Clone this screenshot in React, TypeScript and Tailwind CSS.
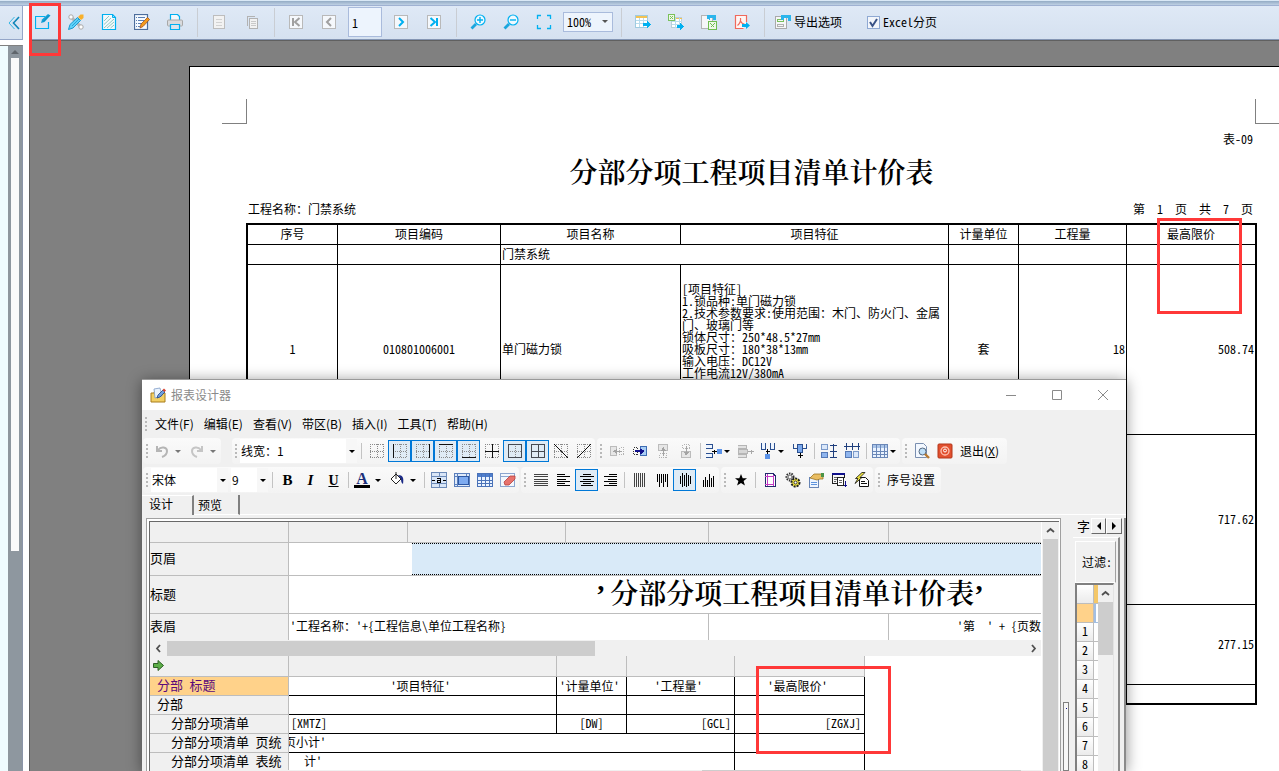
import { useState, type ReactNode } from 'react';

const MONO = "font-['Noto_Sans_Mono_CJK_SC','Noto_Sans_CJK_SC',monospace]";
const UI = "font-['Noto_Sans_CJK_SC','Open_Sans',sans-serif]";
const TITLE = "font-['Liberation_Serif','Noto_Serif_CJK_SC','Noto_Sans_CJK_SC',serif]";

function Svg({ children, size = 16, crisp = true }: { children: ReactNode; size?: number; crisp?: boolean }) {
  return (
    <svg
      width={size}
      height={size}
      viewBox="0 0 16 16"
      fill="none"
      shapeRendering={crisp ? 'crispEdges' : 'auto'}
      className="shrink-0"
    >
      {children}
    </svg>
  );
}

/* ---------- preview toolbar ---------- */

const BLUE = '#00b0f0';

function NavIcon({ d, active }: { d: string; active?: boolean }) {
  return (
    <Svg crisp={false}>
      <rect x="1.5" y="1.5" width="13" height="13" fill="#f5f8fc" stroke="#b9b9b9" />
      <path d={d} stroke={active ? BLUE : '#a0a0a0'} strokeWidth="2" />
    </Svg>
  );
}

const topIcons = {
  edit: (
    <Svg crisp={false}>
      <path d="M10 2.500H.500v12h13V8" stroke={BLUE} strokeWidth="1.200" />
      <path d="M6 9l1-3.500L13 0l2.500 1.500L9.500 8z" fill="#12a0d8" />
      <path d="M8.500 7.500L14 1.500" stroke="#0c86b8" strokeWidth=".8" />
    </Svg>
  ),
  tools: (
    <Svg crisp={false}>
      <path d="M3 3l10 10" stroke="#b7b7b7" strokeWidth="3" />
      <circle cx="3" cy="3" r="2.200" stroke="#a9a9a9" fill="#fff" />
      <circle cx="13" cy="13" r="2.200" stroke="#a9a9a9" fill="#fff" />
      <path d="M.500 15.500L2 10.500 9.500 3.500l3 3-7.500 7.500z" fill="#5fd0f8" stroke="#1a9bd0" />
      <path d="M4 12l7-7" stroke="#1a9bd0" strokeWidth=".8" />
      <path d="M10 3l2.500-2.500h3V4L13 6z" fill="#f8b02a" />
    </Svg>
  ),
  page: (
    <Svg crisp={false}>
      <path d="M1.500.500h10l3 3v12h-13z" fill="#f4f8fc" stroke={BLUE} strokeWidth="1.200" />
      <path d="M11.500.500v3h3" stroke={BLUE} />
      <path d="M3 7l5-5M3 10.500L10 4M3 14L13 5M6 14l7-6M9.500 14l3.500-3" stroke="#86c3b4" strokeWidth=".9" />
    </Svg>
  ),
  note: (
    <Svg crisp={false}>
      <rect x=".5" y=".5" width="13" height="15" fill="#f5faff" stroke="#4c6d9c" strokeWidth="1.2" />
      <path d="M2 3.500h1M4 3.500h7M2 6.500h1M4 6.500h6M2 9.500h1M4 9.500h4M2 12.500h1M4 12.500h2" stroke="#5b7fb4" />
      <path d="M6 14l1-4 6.500-6.500 2 2L9 12.500z" fill="#f39b1d" stroke="#a5521a" strokeWidth=".8" />
    </Svg>
  ),
  print: (
    <Svg crisp={false}>
      <path d="M3.500 6V.500h7l2 2V6" fill="#f4f8fc" stroke={BLUE} strokeWidth="1.200" />
      <rect x=".5" y="6" width="15" height="6" rx="1" fill="#d9dadd" stroke="#a8a8a8" />
      <path d="M3.500 10.500v5h9v-5z" fill="#dbe4ec" stroke={BLUE} strokeWidth="1.200" />
    </Svg>
  ),
  single: (
    <Svg>
      <rect x="2.500" y="1.500" width="11" height="13" fill="#f2f2f2" stroke="#bdbdbd" />
      <path d="M5 5.500h6M5 8.500h6M5 11.500h6" stroke="#d2d2d2" />
    </Svg>
  ),
  copy: (
    <Svg>
      <path d="M3.500 11.500v-9h7" stroke="#b2b2b2" />
      <rect x="5.500" y="4.500" width="8" height="10" fill="#f2f2f2" stroke="#b2b2b2" />
      <path d="M7 7.500h5M7 9.500h5M7 11.500h5" stroke="#c9c9c9" />
    </Svg>
  ),
  zoomIn: (
    <Svg crisp={false}>
      <circle cx="10" cy="6" r="5" fill="#eef9ff" stroke={BLUE} strokeWidth="1.2" />
      <path d="M10 3v6M7 6h6" stroke={BLUE} strokeWidth="1.4" />
      <path d="M6 10l-4.500 4.500" stroke="#1ba6dd" strokeWidth="2.800" />
    </Svg>
  ),
  zoomOut: (
    <Svg crisp={false}>
      <circle cx="10" cy="6" r="5" fill="#eef9ff" stroke={BLUE} strokeWidth="1.2" />
      <path d="M7 6h6" stroke={BLUE} strokeWidth="1.4" />
      <path d="M6 10l-4.500 4.500" stroke="#1ba6dd" strokeWidth="2.800" />
    </Svg>
  ),
  full: (
    <Svg crisp={false}>
      <path d="M1.500 5V1.500H5M11 1.500h3.500V5M14.500 11v3.500H11M5 14.500H1.500V11" stroke={BLUE} strokeWidth="1.300" />
    </Svg>
  ),
  exportTable: (
    <Svg>
      <rect x=".5" y="1.500" width="12" height="12" fill="#fff" stroke="#9fcbe0" />
      <path d="M1 2.500h11" stroke="#f3c252" strokeWidth="2" />
      <path d="M1 6.500h11M1 9.500h11M4.500 4v9M8.500 4v9" stroke="#b9dced" />
      <path d="M8 9h4V7l4 3.500-4 3.500v-2H8z" fill={BLUE} />
    </Svg>
  ),
  exportExcel: (
    <Svg>
      <rect x="3.500" y="3.500" width="10" height="10" fill="#fff" stroke="#b9cfd9" />
      <path d="M7 4h7" stroke="#f3c252" />
      <path d="M4 7.500h10M4 10.500h10M7.500 4v10M11.500 4v10" stroke="#b9dced" />
      <rect x=".5" y=".5" width="6" height="6" fill="#eef8e8" stroke="#7ac15c" />
      <path d="M2 2l3 3M5 2L2 5" stroke="#7ac15c" />
      <path d="M9 11h3V9l4 3.500-4 3.500v-2H9z" fill={BLUE} />
    </Svg>
  ),
  exportSheet: (
    <Svg>
      <rect x=".5" y="1.500" width="11" height="13" fill="#f5f6f8" stroke="#b4b4b4" />
      <path d="M6 5V1h9v5h-3V4H9v2z" fill="#2bb5ec" />
      <rect x="7.500" y="7.500" width="8" height="8" fill="#eef8e8" stroke="#6fbd50" />
      <path d="M9.500 9.500l4 4M13.500 9.500l-4 4" stroke="#6fbd50" />
    </Svg>
  ),
  exportPdf: (
    <Svg crisp={false}>
      <path d="M12.500 8V1.500h-11v13h8" fill="#fff5f3" stroke="#f0695c" strokeWidth="1.200" />
      <path d="M3.500 11.500C6 9.500 7 7 6.500 4M6.500 7c1 2 2.500 3 4 3" stroke="#f0695c" strokeWidth="1.200" />
      <path d="M8 10h4V8l4 3.500-4 3.500v-2H8z" fill={BLUE} />
    </Svg>
  ),
};

function TopButton({ label, children }: { label: string; children: ReactNode }) {
  return (
    <button type="button" aria-label={label} className="flex h-7 w-7 shrink-0 items-center justify-center">
      {children}
    </button>
  );
}

function TopSep() {
  return (
    <span className="flex w-[6px] shrink-0 justify-center">
      <span className="h-[29px] w-px bg-[#c9cdd3]" />
    </span>
  );
}

function PreviewToolbar() {
  const [page, setPage] = useState('1');
  return (
    <div className="flex h-[34px] min-w-0 flex-1 items-center gap-[5px] border-b border-[#8496b4] bg-linear-to-b from-[#dfe9f6] to-[#d5e1f0] pb-px">
      <TopButton label="编辑">{topIcons.edit}</TopButton>
      <TopButton label="工具">{topIcons.tools}</TopButton>
      <TopButton label="页面">{topIcons.page}</TopButton>
      <TopButton label="备注">{topIcons.note}</TopButton>
      <TopButton label="打印">{topIcons.print}</TopButton>
      <TopSep />
      <TopButton label="单页">{topIcons.single}</TopButton>
      <TopButton label="多页">{topIcons.copy}</TopButton>
      <TopSep />
      <TopButton label="首页">
        <NavIcon d="M5 4v8M11.500 4L7 8l4.500 4" />
      </TopButton>
      <TopButton label="上一页">
        <NavIcon d="M10 4L6 8l4 4" />
      </TopButton>
      <input
        aria-label="页码"
        value={page}
        onChange={(e) => setPage(e.target.value)}
        className={`h-[30px] w-[34px] shrink-0 border border-[#a9bbdc] bg-[#edf4fd] px-[3px] text-[12px] ${MONO}`}
      />
      <TopButton label="下一页">
        <NavIcon active d="M6 4l4 4-4 4" />
      </TopButton>
      <TopButton label="末页">
        <NavIcon active d="M11 4v8M4.500 4L9 8l-4.500 4" />
      </TopButton>
      <TopSep />
      <TopButton label="放大">{topIcons.zoomIn}</TopButton>
      <TopButton label="缩小">{topIcons.zoomOut}</TopButton>
      <TopButton label="适合窗口">{topIcons.full}</TopButton>
      <div className="relative shrink-0">
        <select
          aria-label="缩放"
          defaultValue="100%"
          className={`block h-5 w-[50px] appearance-none border border-[#a9bbdc] bg-[#edf4fd] pl-[3px] text-[12px] leading-[18px] ${MONO}`}
        >
          <option>100%</option>
          <option>150%</option>
        </select>
        <span className="pointer-events-none absolute top-2 right-[5px] border-x-3 border-t-3 border-x-transparent border-t-[#555]" />
      </div>
      <TopSep />
      <TopButton label="导出表格">{topIcons.exportTable}</TopButton>
      <TopButton label="导出Excel">{topIcons.exportExcel}</TopButton>
      <TopButton label="导出工作表">{topIcons.exportSheet}</TopButton>
      <TopButton label="导出PDF">{topIcons.exportPdf}</TopButton>
      <TopSep />
      <button type="button" className={`flex shrink-0 items-center gap-[3px] pl-[3px] text-[12px] ${MONO}`}>
        <Svg>
          <rect x=".5" y="2.500" width="11" height="12" fill="#f5f6f8" stroke="#a9a9a9" />
          <rect x="2.500" y="5.500" width="6" height="2" stroke="#7ac15c" />
          <rect x="2.500" y="10.500" width="6" height="2" stroke="#b0b0b0" />
          <path d="M6 6V1h10v6h-3V4H9v2z" fill="#2bb5ec" />
        </Svg>
        导出选项
      </button>
      <label className={`ml-5 flex shrink-0 items-center gap-[3px] text-[12px] ${MONO}`}>
        <span className="relative flex">
          <input
            type="checkbox"
            defaultChecked
            className="peer h-[13px] w-[13px] appearance-none border border-[#8fa9d3] bg-[#f3f6fb]"
          />
          <svg
            width="13"
            height="13"
            viewBox="0 0 13 13"
            fill="none"
            className="pointer-events-none absolute hidden peer-checked:block"
          >
            <path d="M3 6l2.500 4L10 3" stroke="#3a5387" strokeWidth="2" />
          </svg>
        </span>
        Excel分页
      </label>
    </div>
  );
}

/* ---------- report page ---------- */

const SPEC = `[项目特征]
1.锁品种:单门磁力锁
2.技术参数要求:使用范围：木门、防火门、金属门、玻璃门等
锁体尺寸：250*48.5*27mm
吸板尺寸：180*38*13mm
输入电压：DC12V
工作电流12V/380mA`;

const cell = 'border-r border-b border-black px-px pb-[2px]';

function ReportTable() {
  const heads = ['序号', '项目编码', '项目名称', '项目特征', '计量单位', '工程量', '最高限价'];
  return (
    <table className="w-full table-fixed border-separate border-spacing-0 border-t-2 border-l-2 border-black text-[12px] leading-3">
      <colgroup>
        <col className="w-[90px]" />
        <col className="w-[163px]" />
        <col className="w-[180px]" />
        <col />
        <col className="w-[70px]" />
        <col className="w-[108px]" />
        <col className="w-[130px]" />
      </colgroup>
      <thead>
        <tr className="h-5">
          {heads.map((h) => (
            <th key={h} className={`${cell} font-normal last:border-r-2`}>
              {h}
            </th>
          ))}
        </tr>
      </thead>
      <tbody>
        <tr className="h-5">
          <td className={cell} />
          <td className={cell} />
          <td className={cell} colSpan={2}>
            门禁系统
          </td>
          <td className={cell} />
          <td className={cell} />
          <td className={`${cell} border-r-2`} />
        </tr>
        <tr className="h-[170px]">
          <td className={`${cell} text-center`}>1</td>
          <td className={`${cell} text-center`}>010801006001</td>
          <td className={cell}>单门磁力锁</td>
          <td className={`${cell} pt-[18px] align-top whitespace-pre-wrap`}>{SPEC}</td>
          <td className={`${cell} text-center`}>套</td>
          <td className={`${cell} text-right`}>18</td>
          <td className={`${cell} border-r-2 text-right`}>508.74</td>
        </tr>
        {['717.62', '277.15'].map((price, i) => (
          <tr key={price} className={i === 0 ? 'h-[170px]' : 'h-20'}>
            {[0, 1, 2, 3, 4, 5].map((n) => (
              <td key={n} className={cell} />
            ))}
            <td className={`${cell} border-r-2 text-right`}>{price}</td>
          </tr>
        ))}
        <tr className="h-5">
          {[0, 1, 2, 3, 4, 5, 6].map((n) => (
            <td key={n} className={`${cell} border-b-2 last:border-r-2`} />
          ))}
        </tr>
      </tbody>
    </table>
  );
}

function ReportPage() {
  return (
    <div className={`mt-[25px] ml-[159px] min-w-0 flex-1 border-t border-l border-black bg-white pr-[22px] pl-[56px] text-[12px] leading-3 ${MONO}`}>
      <div className="-mr-6 -ml-6 flex justify-between pt-8">
        <span className="h-[25px] w-[25px] border-r border-b border-[#808080]" />
        <span className="h-[25px] w-[26px] border-b border-l border-[#808080]" />
      </div>
      <p className="mt-[9px] pr-1 text-right">表-09</p>
      <h1 className={`mt-[15px] text-center text-[28px] leading-[28px] font-semibold ${TITLE}`}>
        分部分项工程项目清单计价表
      </h1>
      <div className="mt-[15px] flex justify-between pr-1 pl-[2px]">
        <span>工程名称：门禁系统</span>
        <span className="whitespace-pre">第  1  页  共  7  页</span>
      </div>
      <div className="mt-2">
        <ReportTable />
      </div>
    </div>
  );
}

/* ---------- designer window toolbars ---------- */

function Strip({ children, className = '' }: { children: ReactNode; className?: string }) {
  return (
    <div className={`flex h-[26px] shrink-0 items-center rounded-sm bg-linear-to-b from-[#fafafa] to-[#f3f3f3] ${className}`}>
      <span className="flex w-2 flex-col items-center gap-[2px]">
        {[0, 1, 2, 3].map((n) => (
          <span key={n} className="h-[2px] w-[2px] bg-[#b9b9b9]" />
        ))}
      </span>
      {children}
    </div>
  );
}

function Tool({ label, on, children }: { label: string; on?: boolean; children: ReactNode }) {
  return (
    <button
      type="button"
      aria-label={label}
      aria-pressed={on}
      className={`flex h-[22px] w-[23px] shrink-0 items-center justify-center border ${
        on ? 'border-[#0078d7] bg-[#dfebf5]' : 'border-transparent'
      }`}
    >
      {children}
    </button>
  );
}

function Caret({ color = 'border-t-black' }: { color?: string }) {
  return <span className={`border-x-3 border-t-3 border-x-transparent ${color}`} />;
}

function DropTool({ label, wide, muted, children }: { label: string; wide?: boolean; muted?: boolean; children: ReactNode }) {
  return (
    <button
      type="button"
      aria-label={label}
      className={`flex h-[22px] shrink-0 items-center pl-[3px] ${wide ? 'w-[35px] gap-[5px]' : 'w-[31px] gap-[2px]'}`}
    >
      {children}
      <Caret color={muted ? 'border-t-[#777]' : 'border-t-black'} />
    </button>
  );
}

function Sep({ wide }: { wide?: boolean }) {
  return (
    <span className={`flex shrink-0 justify-center ${wide ? 'w-2' : 'w-[6px]'}`}>
      <span className="h-4 w-px bg-[#c3c3c3]" />
    </span>
  );
}

function Combo({ label, value, className }: { label: string; value: string; className: string }) {
  return (
    <div className={`relative shrink-0 ${className}`}>
      <select aria-label={label} defaultValue={value} className="block h-6 w-full appearance-none bg-white pl-px text-[12px] leading-6">
        <option>{value}</option>
      </select>
      <span className="pointer-events-none absolute inset-y-0 right-0 flex w-[11px] items-center justify-center bg-[#f7f7f7]">
        <Caret />
      </span>
    </div>
  );
}

function BorderIcon({ d, soft }: { d?: string; soft?: boolean }) {
  return (
    <Svg>
      <path
        d="M1.500 1v14M1 14.500h14M14.500 1v14M1 1.500h14M8.500 1v14M1 8.500h14"
        stroke="#8a8a8a"
        strokeDasharray="1 1"
      />
      {d && <path d={d} stroke={soft ? '#454a52' : '#111'} />}
    </Svg>
  );
}

const borderTools = [
  { label: '无边框', on: false },
  { label: '左边框', on: true, d: 'M1.500 1v14' },
  { label: '右边框', on: true, d: 'M14.500 1v14' },
  { label: '上边框', on: true, d: 'M1 1.500h14' },
  { label: '下边框', on: true, d: 'M1 14.500h14' },
  { label: '内边框', on: false, d: 'M8.500 1v14M1 8.500h14' },
  { label: '外边框', on: true, soft: true, d: 'M1.500 1.500h13v13h-13z' },
  { label: '所有边框', on: true, soft: true, d: 'M1.500 1.500h13v13h-13zM8.500 1v14M1 8.500h14' },
  { label: '左斜线', on: false, d: 'M1 1l14 14' },
  { label: '右斜线', on: false, d: 'M15 1L1 15' },
];

function MoveIcon({ rotate = 0, active }: { rotate?: number; active?: boolean }) {
  const c = active ? '#10108c' : '#a3a3a3';
  return (
    <Svg>
      <g transform={`rotate(${rotate} 8 8)`}>
        <rect x="1.500" y="4.500" width="4" height="7" stroke={active ? '#333' : '#b3b3b3'} strokeDasharray="1 1" />
        <rect x="8.500" y="3.500" width="6" height="9" fill={active ? '#a9cdf5' : '#e6e6e6'} stroke={active ? '#3d6bb3' : '#bcbcbc'} />
        <path d="M3 8h9M9 5.500v5M10 6.500v3M11 7v2" stroke={c} strokeWidth={active ? 2 : 1} />
      </g>
    </Svg>
  );
}

function SplitIcon({ muted, rotate = 0 }: { muted?: boolean; rotate?: number }) {
  const line = muted ? '#b2b2b2' : '#2a4f8f';
  return (
    <Svg>
      <g transform={`rotate(${rotate} 8 8)`}>
        <path d="M0 1.500h6v4H0M0 10.500h6v4H0" stroke={line} fill={muted ? '#ddd' : '#eef5ff'} />
        <path d="M6 8.500h5M8 6.500v4" stroke={muted ? '#b2b2b2' : '#000'} />
        <rect x="11" y="6" width="5" height="5" fill={muted ? '#d0d0d0' : '#5b93e8'} />
      </g>
    </Svg>
  );
}

function GridIcon({ head = '#6b98e0', lines = '#4a72b8' }: { head?: string; lines?: string }) {
  return (
    <Svg>
      <rect x=".5" y="1.500" width="15" height="13" fill="#eaf3ff" stroke={lines} />
      <rect x="1" y="2" width="14" height="3" fill={head} />
      <path d="M1 8.500h14M1 11.500h14M4.500 2v12M8.500 2v12M12.500 2v12" stroke={lines} />
    </Svg>
  );
}

function LinesIcon({ d, vertical, muted }: { d: string; vertical?: boolean; muted?: boolean }) {
  return (
    <Svg>
      <g transform={vertical ? 'matrix(0 1 1 0 0 0)' : undefined}>
        <path d={d} stroke={muted ? '#444' : '#000'} />
      </g>
    </Svg>
  );
}

const hAlign = [
  { label: '两端对齐', d: 'M1 2.500h14M1 4.500h14M1 7.500h14M1 9.500h14M1 11.500h14M1 13.500h14', muted: true },
  { label: '左对齐', d: 'M1 2.500h8M1 4.500h13M1 7.500h9M1 9.500h13M1 11.500h8M1 13.500h13' },
  { label: '居中', d: 'M4 2.500h8M1 4.500h14M4 7.500h8M1 9.500h14M4 11.500h8M2 13.500h12', on: true },
  { label: '右对齐', d: 'M7 2.500h8M2 4.500h13M6 7.500h9M2 9.500h13M7 11.500h8M2 13.500h13' },
];

const vAlign = [
  { label: '垂直两端', d: 'M1 3.500h14M1 5.500h14M1 7.500h14M1 9.500h14M1 11.500h14M1 13.500h14', muted: true },
  { label: '靠上', d: 'M2 3.500h8M2 5.500h13M2 7.500h9M2 9.500h13M2 11.500h8M2 13.500h13' },
  { label: '垂直居中', d: 'M4 3.500h8M1 5.500h14M3 7.500h11M1 9.500h14M3 11.500h11M4 13.500h8', on: true },
  { label: '靠下', d: 'M8 3.500h7M5 5.500h10M8 7.500h7M2 9.500h13M6 11.500h9M4 13.500h11' },
];

function ToolRowOne() {
  return (
    <div className="flex pl-px">
      <Strip>
        <DropTool label="撤销" wide muted>
          <Svg crisp={false}>
            <path d="M3 3v5h5" stroke="#b5b5b5" strokeWidth="2" />
            <path d="M4 7c3-4 9-3 9 1 0 3-2 5-5 6" stroke="#b5b5b5" strokeWidth="2" />
          </Svg>
        </DropTool>
        <DropTool label="重做" wide muted>
          <Svg crisp={false}>
            <path d="M13 3v5H8" stroke="#c5c5c5" strokeWidth="2" />
            <path d="M12 7C9 3 3 4 3 8c0 3 2 5 5 6" stroke="#c5c5c5" strokeWidth="2" />
          </Svg>
        </DropTool>
      </Strip>
      <Strip className="ml-[11px]">
        <Combo label="线宽" value="线宽：1" className="w-[117px]" />
        <Sep wide />
        {borderTools.map((b) => (
          <Tool key={b.label} label={b.label} on={b.on}>
            <BorderIcon d={b.d} soft={b.soft} />
          </Tool>
        ))}
      </Strip>
      <Strip className="ml-[2px]">
        <Tool label="左插入">
          <MoveIcon rotate={180} />
        </Tool>
        <Tool label="右插入">
          <MoveIcon active />
        </Tool>
        <Tool label="上插入">
          <MoveIcon rotate={270} />
        </Tool>
        <Tool label="下插入">
          <MoveIcon rotate={90} />
        </Tool>
        <Sep />
        <DropTool label="拆分列">
          <SplitIcon />
        </DropTool>
        <Tool label="合并列">
          <Svg>
            <path d="M0 2.500h8v3H0M0 11.500h8v3H0" stroke="#b5b5b5" fill="#e2e2e2" />
            <rect x=".500" y="6.500" width="9" height="4" fill="#d6d6d6" stroke="#b5b5b5" />
            <path d="M10 8.500h6M13.500 6.500v4" stroke="#a8a8a8" />
          </Svg>
        </Tool>
        <DropTool label="拆分行">
          <SplitIcon rotate={90} />
        </DropTool>
        <Tool label="合并行">
          <Svg>
            <path d="M1.500 1v4.500H6M14.500 1v4.500H10" stroke="#2a4f8f" />
            <rect x="5.500" y="1.500" width="5" height="8" fill="#7aa8ec" stroke="#2a4f8f" />
            <path d="M8.500 10v5M6 12.500h5" stroke="#000" />
          </Svg>
        </Tool>
        <Sep />
        <Tool label="等高">
          <Svg>
            <rect x=".5" y="1.500" width="6" height="5" fill="#dbe8fa" stroke="#7c9ac9" />
            <rect x=".5" y="9.500" width="6" height="5" fill="#8fb5ee" stroke="#5579b5" />
            <path d="M9 2.500h7M9 8.500h7M9 14.500h7M12.500 1v14" stroke="#1f3f7d" />
          </Svg>
        </Tool>
        <Tool label="等宽">
          <Svg>
            <path d="M0 3.500h16M2.500 0v7M8.500 0v7M14.500 0v7" stroke="#1f3f7d" />
            <rect x="1.500" y="8.500" width="6" height="6" fill="#8fb5ee" stroke="#5579b5" />
            <rect x="9.500" y="8.500" width="5" height="6" fill="#dbe8fa" stroke="#7c9ac9" />
          </Svg>
        </Tool>
        <Sep />
        <DropTool label="表格">
          <GridIcon head="#a9c4e8" lines="#6b88b8" />
        </DropTool>
      </Strip>
      <Strip className="ml-[2px] pr-2">
        <Tool label="打印预览">
          <Svg crisp={false}>
            <path d="M1.500.500h8l3 3v11h-11z" fill="#f3f8ff" stroke="#7a8fb0" />
            <circle cx="8.500" cy="8.500" r="3.500" fill="#bfe0f8" stroke="#56687f" />
            <path d="M11 11l4 4" stroke="#b8792e" strokeWidth="2.400" />
          </Svg>
        </Tool>
        <Tool label="关闭">
          <Svg crisp={false}>
            <rect x="1" y="1" width="14" height="14" rx="1" fill="#e2502f" stroke="#b3371b" />
            <circle cx="8" cy="8" r="4" stroke="#ffc3b2" strokeWidth="1.300" />
            <circle cx="8" cy="7.500" r="1.500" stroke="#fff" />
          </Svg>
        </Tool>
        <button type="button" className="pl-1 text-[12px]">
          退出(<span className="underline">X</span>)
        </button>
      </Strip>
    </div>
  );
}

function ToolRowTwo() {
  return (
    <div className="mt-[3px] flex pl-px">
      <Strip>
        <Combo label="字体" value="宋体" className="w-[77px]" />
        <Combo label="字号" value="9" className="ml-[3px] w-[37px]" />
        <Sep wide />
        <Tool label="加粗">
          <b className="font-['Liberation_Serif',serif] text-[15px]">B</b>
        </Tool>
        <Tool label="斜体">
          <b className="font-['Liberation_Serif',serif] text-[15px] italic">I</b>
        </Tool>
        <Tool label="下划线">
          <b className="font-['Liberation_Serif',serif] text-[14px] underline">U</b>
        </Tool>
        <Sep />
        <DropTool label="字体颜色" wide>
          <span className="flex w-4 flex-col items-center font-['Liberation_Serif',serif] text-[16px] leading-[13px] font-bold text-[#1c2f7a]">
            A
            <span className="h-[3px] w-4 bg-black" />
          </span>
        </DropTool>
        <DropTool label="填充颜色" wide>
          <Svg crisp={false}>
            <path d="M2 7l5-5 5 5-5 5z" fill="#fff" stroke="#222" />
            <path d="M7 0v7" stroke="#222" />
            <path d="M9 3c5 0 6 3 5 9-2-1-2-4-2-5z" fill="#1b2a86" />
          </Svg>
        </DropTool>
        <Sep />
        <Tool label="合并单元格">
          <Svg>
            <rect x=".5" y=".5" width="15" height="15" fill="#d9e6f7" stroke="#6c8ab8" />
            <path d="M1 4.500h14M1 11.500h14M8.500 1v3M8.500 12v3" stroke="#6c8ab8" />
            <path d="M1 8.500h3M12 8.500h3M6 6.500h3v4H6v-2h3" stroke="#000" />
          </Svg>
        </Tool>
        <Tool label="选择区域">
          <Svg>
            <rect x=".5" y="1.500" width="15" height="13" fill="#dfeaf9" stroke="#5b7fbc" />
            <path d="M1 4.500h14M1 12.500h14M3.500 2v12M12.500 2v3" stroke="#5b7fbc" />
            <rect x="4.500" y="4.500" width="10" height="8" fill="#7eabf0" stroke="#2e58a3" />
          </Svg>
        </Tool>
        <Tool label="选择表格">
          <GridIcon head="#4f7fce" />
        </Tool>
        <Tool label="清除">
          <Svg crisp={false}>
            <rect x=".5" y="1.500" width="14" height="13" fill="#f3f7fd" stroke="#8ca6cf" />
            <path d="M1 4.500h14" stroke="#8ca6cf" />
            <path d="M4 10l6-6h5v3l-6 6H5z" fill="#e8726c" stroke="#b5403c" strokeWidth=".8" />
          </Svg>
        </Tool>
      </Strip>
      <Strip className="ml-[2px]">
        {hAlign.map((a) => (
          <Tool key={a.label} label={a.label} on={a.on}>
            <LinesIcon d={a.d} muted={a.muted} />
          </Tool>
        ))}
        <Sep />
        {vAlign.map((a) => (
          <Tool key={a.label} label={a.label} on={a.on}>
            <LinesIcon d={a.d} muted={a.muted} vertical />
          </Tool>
        ))}
      </Strip>
      <Strip className="ml-[2px]">
        <Tool label="收藏">
          <Svg crisp={false}>
            <path d="M8 2l1.700 4.200 4.300.1-3.400 2.800 1.300 4.400L8 11l-3.900 2.500 1.300-4.400L2 6.300l4.300-.1z" fill="#000" />
          </Svg>
        </Tool>
        <Sep />
        <Tool label="页面设置">
          <Svg>
            <path d="M3 1.500h8l2 2v11H3z" fill="#fff" stroke="#222a6b" />
            <path d="M5.500 2v12M11.500 3v11M3 4.500h9M3 12.500h9" stroke="#c63bc6" />
          </Svg>
        </Tool>
        <Tool label="选项">
          <Svg crisp={false}>
            <circle cx="5" cy="5" r="3.500" stroke="#333" strokeWidth="2" strokeDasharray="1.500 1" />
            <circle cx="5" cy="5" r="2" stroke="#666" />
            <circle cx="10.500" cy="10.500" r="4" fill="#f2e640" stroke="#222" strokeWidth="2" strokeDasharray="2 1" />
            <circle cx="10.500" cy="10.500" r="1.500" fill="#fff" stroke="#333" />
          </Svg>
        </Tool>
        <Tool label="属性">
          <Svg crisp={false}>
            <rect x="1.500" y="5.500" width="9" height="10" fill="#eef5ff" stroke="#6885b5" />
            <path d="M3 10.500h6M3 12.500h6" stroke="#5d93dd" />
            <path d="M2 6l4-4h9v5h-3L9 8z" fill="#e9bd62" stroke="#9b7325" strokeWidth=".8" />
            <path d="M13 1h3v4h-3z" fill="#4b9447" />
          </Svg>
        </Tool>
        <Tool label="数据">
          <Svg>
            <path d="M1 1.500h13" stroke="#10108c" strokeWidth="2" />
            <path d="M1.500 3v8.500H6M13.500 3v3" stroke="#222" />
            <path d="M3 5.500h3M3 7.500h3M3 9.500h2" stroke="#666" />
            <rect x="6.500" y="5.500" width="6" height="8" fill="#fff" stroke="#222" />
            <path d="M8 8.500h3M8 10.500h3" stroke="#666" />
            <path d="M14.500 9v6M13 13.500h3" stroke="#10108c" />
          </Svg>
        </Tool>
        <Tool label="脚本">
          <Svg crisp={false}>
            <path d="M5.500 5.500h6l3 3v6h-9z" fill="#fff" stroke="#111" />
            <path d="M7 9.500h4M7 11.500h6" stroke="#111" />
            <path d="M8 .500l-6.500 6H4l-3 5 7-6H6l5-5z" fill="#f2e640" stroke="#111" strokeWidth=".8" />
          </Svg>
        </Tool>
      </Strip>
      <Strip className="ml-[2px] pr-[6px]">
        <button type="button" className="pl-1 text-[12px]">
          序号设置
        </button>
      </Strip>
    </div>
  );
}

/* ---------- designer grid ---------- */

function ScrollArrow({ d }: { d: string }) {
  return (
    <svg width="9" height="9" viewBox="0 0 9 9" fill="none">
      <path d={d} stroke="#505050" strokeWidth="1.800" />
    </svg>
  );
}

const lab = 'bg-[#f0f0f0] border-r border-b border-[#bdbdbd] text-[13px] whitespace-pre pb-[2px]';
const gray = 'border-r border-b border-[#bdbdbd]';
const ink = 'border-r border-b border-r-black border-b-black';

function TopBands() {
  return (
    <table className="w-full table-fixed border-separate border-spacing-0 bg-white leading-4">
      <colgroup>
        <col className="w-[139px]" />
        <col className="w-[119px]" />
        <col className="w-[158px]" />
        <col className="w-[143px]" />
        <col className="w-[180px]" />
        <col />
      </colgroup>
      <tbody>
        <tr className="h-[21px] bg-[#f0f0f0]">
          {[0, 1, 2, 3, 4, 5].map((n) => (
            <td key={n} className={`${gray} last:border-r-0`} />
          ))}
        </tr>
        <tr className="h-[33px]">
          <td className={lab}>页眉</td>
          <td colSpan={5} className="border-b border-[#bdbdbd] pl-[123px]">
            <div className="h-8 border-y border-dotted border-black bg-[#d9eaf8]" />
          </td>
        </tr>
        <tr className="h-[38px]">
          <td className={lab}>标题</td>
          <td
            colSpan={5}
            className={`border-b border-[#bdbdbd] pl-[307px] text-[28px] leading-[28px] font-semibold whitespace-nowrap ${TITLE}`}
          >
            ’ 分部分项工程项目清单计价表’
          </td>
        </tr>
        <tr className="h-[26px] text-[12px]">
          <td className={`${lab} border-b-0`}>表眉</td>
          <td colSpan={3} className="border-r border-[#bdbdbd] pb-[2px] pl-px">
            '工程名称：'+{'{'}工程信息\单位工程名称{'}'}
          </td>
          <td className="border-r border-[#bdbdbd]" />
          <td className="pb-[2px] pl-[68px] whitespace-pre">'第  ' + {'{'}页数</td>
        </tr>
      </tbody>
    </table>
  );
}

function DetailBands() {
  return (
    <table className="w-full table-fixed border-separate border-spacing-0 bg-white text-[12px] leading-4">
      <colgroup>
        <col className="w-[139px]" />
        <col className="w-[268px]" />
        <col className="w-[70px]" />
        <col className="w-[108px]" />
        <col className="w-[130px]" />
        <col />
      </colgroup>
      <tbody>
        <tr className="h-[21px]">
          <td className={`${lab} pl-[3px]`}>
            <svg width="11" height="11" viewBox="0 0 11 11">
              <path d="M.5 3.500H5v-3l5.500 5-5.500 5v-3H.5z" fill="#5cae48" stroke="#2e5f26" />
            </svg>
          </td>
          {[0, 1, 2, 3].map((n) => (
            <td key={n} className={`${gray} bg-[#f0f0f0]`} />
          ))}
          <td />
        </tr>
        <tr className="h-[19px] text-center">
          <td className={`${lab} bg-[#ffd28a] pl-[7px] text-left text-[#5b0a7a]`}>分部 标题</td>
          <td className={`${ink} pr-1`}>'项目特征'</td>
          <td className={`${ink} pr-1`}>'计量单位'</td>
          <td className={`${ink} pr-1`}>'工程量'</td>
          <td className={`${ink} pr-1`}>'最高限价'</td>
          <td />
        </tr>
        <tr className="h-[19px]">
          <td className={`${lab} pl-[7px]`}>分部</td>
          {[0, 1, 2, 3].map((n) => (
            <td key={n} className={ink} />
          ))}
          <td />
        </tr>
        <tr className="h-[19px]">
          <td className={`${lab} pl-[21px]`}>分部分项清单</td>
          <td className={`${ink} pb-[2px] pl-[2px]`}>[XMTZ]</td>
          <td className={`${ink} pb-[2px] text-center`}>[DW]</td>
          <td className={`${ink} pr-[3px] pb-[2px] text-right`}>[GCL]</td>
          <td className={`${ink} pr-[3px] pb-[2px] text-right`}>[ZGXJ]</td>
          <td />
        </tr>
        <tr className="h-[19px]">
          <td className={`${lab} pl-[21px]`}>分部分项清单 页统</td>
          <td colSpan={3} className={`${ink} overflow-hidden pb-[2px] -indent-[5px]`}>
            页小计'
          </td>
          <td className={ink} />
          <td />
        </tr>
        <tr className="h-[17px]">
          <td className={`${lab} border-b-0 pb-px pl-[21px]`}>分部分项清单 表统</td>
          <td colSpan={3} className="border-r border-black pb-px pl-[15px]">
            计'
          </td>
          <td className="border-r border-black" />
          <td />
        </tr>
      </tbody>
    </table>
  );
}

function DesignGrid() {
  return (
    <div className="ml-1 flex min-w-0 flex-1 border-t border-r border-l border-[#a0a0a0] bg-white pt-[2px] pr-px pl-[2px]">
      <div className={`flex min-w-0 flex-1 border-t border-l border-[#696969] ${MONO}`}>
        <div className="min-w-0 flex-1 overflow-hidden">
          <TopBands />
          <div className="flex h-4 items-center bg-[#f0f0f0]">
            <span className="flex w-[17px] justify-center">
              <ScrollArrow d="M6 1L3 4.500 6 8" />
            </span>
            <span className="h-[15px] w-[48%] bg-[#cdcdcd]" />
            <span className="ml-auto flex w-4 justify-center">
              <ScrollArrow d="M3 1l3 3.500L3 8" />
            </span>
          </div>
          <DetailBands />
          <div className="flex h-4 bg-[#f0f0f0] pl-[62%]">
            <span className="w-[94%] bg-[#cdcdcd]" />
          </div>
        </div>
        <div className="ml-px flex w-[17px] flex-col items-center bg-[#f0f0f0]">
          <span className="flex h-[17px] items-center">
            <ScrollArrow d="M1 6l3.500-3L8 6" />
          </span>
          <span className="w-[15px] flex-1 bg-[#cdcdcd]" />
        </div>
      </div>
    </div>
  );
}

function FieldPanel() {
  return (
    <div className={`flex w-[53px] shrink-0 flex-col border-r-2 border-[#8a8a8a] ${MONO}`}>
      <div className="flex items-center pl-[4px]">
        <span className="w-[14px] text-[13px] leading-4">字</span>
        <button type="button" aria-label="向左" className="flex h-4 w-[15px] items-center justify-center border border-white border-r-[#696969] border-b-[#696969]">
          <span className="border-y-4 border-r-4 border-y-transparent border-r-black" />
        </button>
        <button type="button" aria-label="向右" className="flex h-4 w-4 items-center justify-center border border-white border-r-[#696969] border-b-[#696969]">
          <span className="border-y-4 border-l-4 border-y-transparent border-l-black" />
        </button>
      </div>
      <div className="mt-[3px] mr-1 flex min-h-0 flex-1 flex-col border-t border-r-2 border-t-white border-r-[#8a8a8a] pt-[3px] pl-[2px]">
        <label className="mr-[2px] block h-[42px] shrink-0 border border-white border-r-[#a0a0a0] pl-[6px] text-[12px] leading-[40px] whitespace-nowrap">
          过滤:
        </label>
        <div className="mr-1 flex min-h-0 flex-1 border-t-2 border-r border-l-2 border-t-[#808080] border-r-[#e3e3e3] border-l-[#808080] bg-white">
          <table className="w-[21px] shrink-0 table-fixed border-separate border-spacing-0 self-start text-center text-[12px] leading-4">
            <colgroup>
              <col className="w-[17px]" />
              <col />
            </colgroup>
            <tbody>
              <tr className="h-[19px]">
                <td className={`${gray} bg-linear-to-b from-white to-[#ebebeb]`} />
                <td className="border-b border-[#bdbdbd] bg-[#f4c768]" />
              </tr>
              <tr className="h-[19px]">
                <td className={`${gray} bg-[#ffd28a]`} />
                <td className="border-b border-l-2 border-[#a3bfe2]" />
              </tr>
              {[1, 2, 3, 4, 5, 6, 7, 8].map((n) => (
                <tr key={n} className="h-[19px]">
                  <td className={`${gray} bg-linear-to-b from-white to-[#ebebeb] pb-[2px]`}>{n}</td>
                  <td className="border-b border-[#bdbdbd]" />
                </tr>
              ))}
            </tbody>
          </table>
          <div className="flex flex-1 flex-col items-center bg-[#f0f0f0]">
            <span className="flex h-[17px] items-center">
              <ScrollArrow d="M1 6l3.500-3L8 6" />
            </span>
            <span className="h-[53px] w-full bg-[#cdcdcd]" />
          </div>
        </div>
      </div>
    </div>
  );
}

function DesignerWindow() {
  const menus = ['文件(F)', '编辑(E)', '查看(V)', '带区(B)', '插入(I)', '工具(T)', '帮助(H)'];
  return (
    <section
      className={`absolute top-[379px] right-[153px] bottom-0 left-[142px] flex flex-col border-t border-[#9a9a9a] bg-[#f0f0f0] shadow-[0_2px_14px_rgba(0,0,0,0.45)] ${UI}`}
    >
      <header className="flex h-[30px] shrink-0 items-center bg-white pl-2">
        <Svg crisp={false}>
          <path d="M1 6h3l1-3h4l1 3h5v9H1z" fill="#f2cf63" stroke="#a87c1c" />
          <path d="M4 2l6-1 2 8-7 2z" fill="#eaf4ff" stroke="#7f9cc6" strokeWidth=".8" />
          <path d="M7 11l1-3 5-5 2 2-5 5z" fill="#6f9fe0" stroke="#27447e" strokeWidth=".8" />
          <path d="M12.500 3l1.500-1.500 2 2L14.500 5z" fill="#d8402f" />
        </Svg>
        <h2 className="ml-[5px] text-[12px] text-[#8a8a8a]">报表设计器</h2>
        <div className="ml-auto flex">
          {[
            { label: '最小化', d: 'M0 5.500h10' },
            { label: '最大化', d: 'M.5.5h9v9h-9z' },
            { label: '关闭窗口', d: 'M0 0l10 10M10 0L0 10' },
          ].map((b) => (
            <button key={b.label} type="button" aria-label={b.label} className="flex w-[46px] justify-center">
              <svg width="10" height="10" viewBox="0 0 10 10" fill="none">
                <path d={b.d} stroke="#8a8a8a" />
              </svg>
            </button>
          ))}
        </div>
      </header>
      <nav className="flex h-7 shrink-0 items-center pl-[3px]">
        <span className="mr-[7px] flex w-[3px] flex-col gap-[2px]">
          {[0, 1, 2, 3].map((n) => (
            <span key={n} className="h-[2px] w-[2px] bg-[#b9b9b9]" />
          ))}
        </span>
        <div className="flex gap-[10px]">
          {menus.map((m) => (
            <button key={m} type="button" className="text-[12px]">
              {m}
            </button>
          ))}
        </div>
      </nav>
      <ToolRowOne />
      <ToolRowTwo />
      <div role="tablist" className={`mt-[2px] flex h-5 shrink-0 text-[12px] ${MONO}`}>
        <button type="button" role="tab" aria-selected="true" className="w-[52px] border-t border-r-2 border-t-white border-r-[#808080] pr-3 pb-1 leading-4">
          设计
        </button>
        <button type="button" role="tab" aria-selected="false" className="w-[46px] border-r-2 border-b border-b-white border-r-[#808080] pr-3 leading-4">
          预览
        </button>
        <span className="flex-1 border-b border-white" />
      </div>
      <div className="flex min-h-0 flex-1 overflow-hidden pt-[3px]">
        <DesignGrid />
        <div className="flex w-3 shrink-0 flex-col items-center pr-[2px]">
          <span className="mt-[184px] flex w-[6px] flex-1 justify-center border border-[#808080] bg-[#f7f7f7] pt-[5px]">
            <span className="h-px w-px bg-[#10108c]" />
          </span>
        </div>
        <FieldPanel />
      </div>
    </section>
  );
}

export default function App() {
  return (
    <div className="relative flex h-screen flex-col overflow-hidden bg-white text-black">
      <div className="h-[5px] shrink-0 border-t border-[#d9e8f6] bg-linear-to-b from-[#93abc4] to-[#bed0e4]" />
      <div className="flex shrink-0 border-t border-[#9fb1d2]">
        <div className="flex w-[23px] shrink-0 items-center justify-end border-r border-b border-[#94a6c8] bg-linear-to-b from-[#dfe9f6] to-[#d5e1f0] pr-[2px]">
          <button type="button" aria-label="收起">
            <svg width="12" height="14" viewBox="0 0 12 14" fill="none">
              <path d="M6.500 1L1 7l5.500 6" stroke="#36b8e6" />
              <path d="M11 1L5.500 7 11 13" stroke="#0f86b8" strokeWidth="1.600" />
            </svg>
          </button>
        </div>
        <div className="w-[6px] shrink-0" />
        <PreviewToolbar />
      </div>
      <div className="flex min-h-0 flex-1">
        <div className="mt-[5px] flex w-[23px] shrink-0 border-t border-r border-t-[#808080] border-r-[#8b95a8]">
          <div className="w-2 bg-[#effcff]" />
          <div className="flex flex-1 flex-col items-center bg-[#8e979f]">
            <span className="mt-1 border-x-4 border-b-4 border-x-transparent border-b-[#60666c]" />
            <span className="mt-1 h-[68%] w-2 bg-[#fafafa]" />
          </div>
        </div>
        <div className="w-[6px] shrink-0" />
        <div className="flex min-w-0 flex-1 border-t border-l border-[#606060] bg-[#808080]">
          <ReportPage />
        </div>
      </div>

      <DesignerWindow />

      {/* highlight frames over the edit button and the price column */}
      <div className="pointer-events-none absolute top-[3px] left-[29px] h-[53px] w-8 border-3 border-[#ff3838]" />
      <div className="pointer-events-none absolute top-[218px] right-[37px] h-24 w-[85px] border-3 border-[#ff3838]" />
      <div className="pointer-events-none absolute top-[666px] left-[756px] h-[88px] w-[135px] border-3 border-[#ff3838]" />
    </div>
  );
}
